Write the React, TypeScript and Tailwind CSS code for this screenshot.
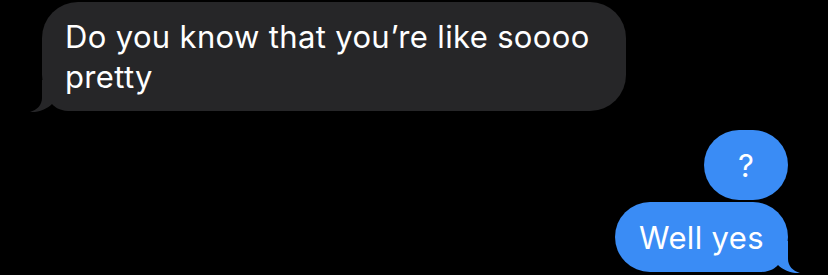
export default function App() {
  return (
    <div className="w-[828px] h-[275px] bg-black overflow-hidden flex flex-col font-['Inter','Liberation_Sans',sans-serif] text-white">
      <div className="pl-[42px] pt-[2px]">
        <div className="relative w-[584px] h-[109px] rounded-[36px] bg-[#262628] pl-[23px] pr-[20px] pt-[15px]">
          <svg
            className="absolute left-[-14px] bottom-[-3px]"
            width="54"
            height="36"
            viewBox="0 0 54 36"
          >
            <path
              d="M14 2 L14 20 C14 27 9 32 2 34 C11 34.5 19 31 24 26 C27 29 31 32.5 40 33 L52 33 L52 2 Z"
              fill="#262628"
            />
          </svg>
          <p className="relative text-[31px] leading-[40px] tracking-[0.35px]">
            Do you know that you’re like soooo pretty
          </p>
        </div>
      </div>

      <div className="mt-[19px] flex flex-col items-end gap-[2px] pr-[40px]">
        <div className="w-[84px] h-[70px] rounded-full bg-[#3a8cf5] flex items-center justify-center">
          <span className="text-[31px] leading-none">?</span>
        </div>
        <div className="relative h-[70px] w-[173px] rounded-[35px] bg-[#3a8cf5] flex items-center justify-center">
          <svg
            className="absolute right-[-14px] bottom-[-3px]"
            width="54"
            height="36"
            viewBox="0 0 54 36"
          >
            <path
              d="M40 2 L40 20 C40 27 45 32 52 34 C43 34.5 35 31 30 26 C27 29 23 32.5 14 33 L2 33 L2 2 Z"
              fill="#3a8cf5"
            />
          </svg>
          <span className="relative text-[31px] leading-none tracking-[0.35px]">Well yes</span>
        </div>
      </div>
    </div>
  )
}
